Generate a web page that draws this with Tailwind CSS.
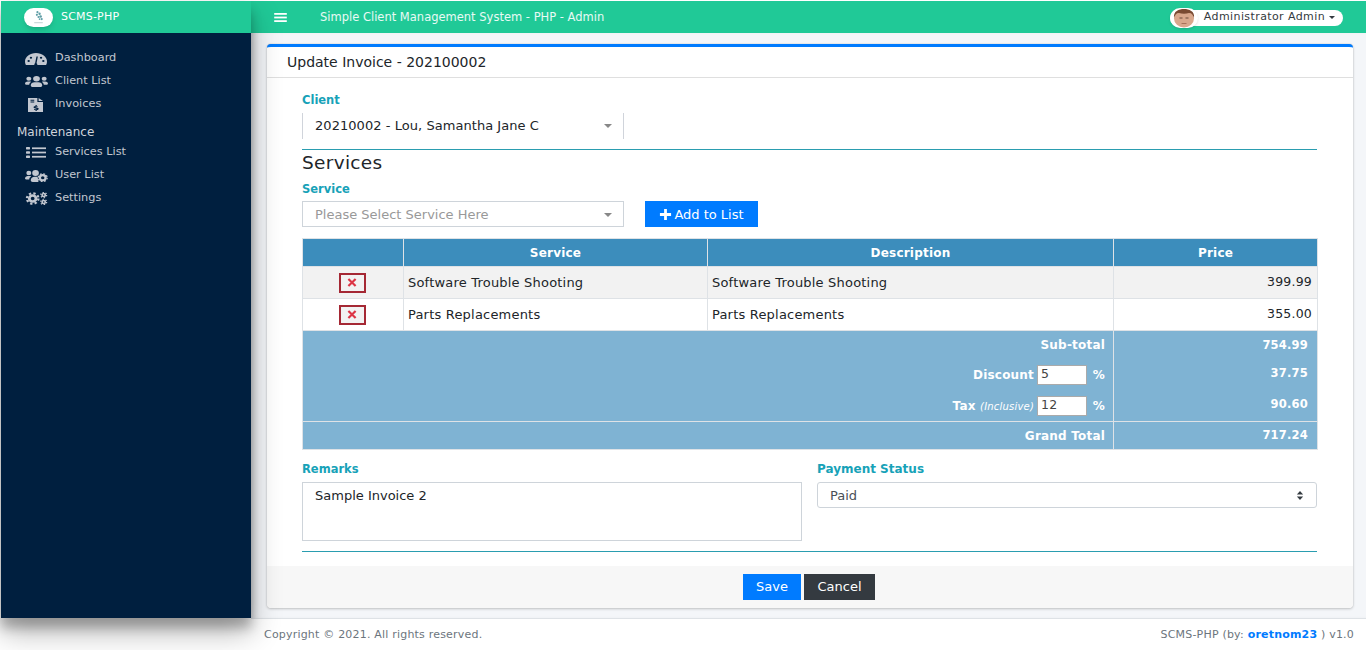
<!DOCTYPE html>
<html lang="en">
<head>
  <meta charset="UTF-8" />
  <title>Update Invoice</title>
  <script src="https://cdn.jsdelivr.net/npm/@tailwindcss/browser@4"></script>
</head>
<body class="h-[650px] overflow-hidden bg-white pt-px pl-px font-['DejaVu_Sans',sans-serif] text-[13px] text-[#212529]">
<div class="flex h-[649px]">

  <!-- Sidebar -->
  <aside class="relative z-10 h-[617px] w-[250px] shrink-0 bg-[#001f3f] shadow-[0_14px_28px_rgba(0,0,0,0.3),0_10px_10px_rgba(0,0,0,0.22)]">
    <div class="flex h-8 items-center bg-[#20c997] pl-[23px] text-white">
      <div class="flex h-[19px] w-[29px] items-center justify-center rounded-full bg-white shadow-md">
        <svg viewBox="0 0 14 14" class="h-[15px] w-[15px]" fill="#5f9ea6"><circle cx="6" cy="2" r="1"/><circle cx="8" cy="3.500" r="1.100"/><circle cx="5.500" cy="4.500" r="1"/><circle cx="9" cy="6" r="1.200"/><circle cx="7" cy="6.500" r="1"/><circle cx="10" cy="8.500" r="1"/><circle cx="8" cy="8.500" r=".8"/><rect x="3" y="11.500" width="8" height=".8" fill="#b9c9cc"/></svg>
      </div>
      <span class="ml-2 text-[11px] tracking-[0.2px]">SCMS-PHP</span>
    </div>
    <nav class="pt-[14px] text-[11.300px] text-[#c2c7d0]">
      <a class="flex h-[23px] items-center pl-6"><span class="flex w-[30px]">
        <svg viewBox="0 0 24 16" preserveAspectRatio="none" class="h-[12px] w-[22px]" fill="#c2c7d0"><path d="M12 0C5.400 0 0 5 0 11.500c0 1.700.4 3.100 1 4.500h22c.6-1.400 1-2.800 1-4.500C24 5 18.600 0 12 0zm-1 13.500l1.500-9 1.500.3-1.400 8.700c1 .6 1 1.500.7 2.500h-3c-.3-1 0-2 .7-2.500zM4 12a1.300 1.300 0 110-2.600 1.300 1.300 0 010 2.600zm2.500-4.500a1.300 1.300 0 110-2.600 1.300 1.300 0 010 2.600zM20 12a1.300 1.300 0 110-2.600 1.300 1.300 0 010 2.600zm-2.500-4.500a1.300 1.300 0 110-2.600 1.300 1.300 0 010 2.600z"/></svg></span><span>Dashboard</span></a>
      <a class="flex h-[23px] items-center pl-6"><span class="flex w-[30px]">
        <svg viewBox="0 0 24 14" preserveAspectRatio="none" class="h-[11px] w-[23px]" fill="#c2c7d0"><circle cx="4" cy="3.500" r="2.600"/><circle cx="20" cy="3.500" r="2.600"/><circle cx="12" cy="3.600" r="3.500"/><path d="M0 10c0-2 1.500-3 3-3h2c.6 0 1 .2 1.400.5C5 8.500 4.500 9.500 4.400 11H1c-.6 0-1-.4-1-1zM24 10c0-2-1.500-3-3-3h-2c-.6 0-1 .2-1.400.5 1.400 1 1.900 2 2 3.500H23c.6 0 1-.4 1-1zM6 12c0-2.400 1.800-4 4-4h4c2.200 0 4 1.600 4 4 0 1.100-.9 2-2 2H8c-1.100 0-2-.9-2-2z"/></svg></span><span>Client List</span></a>
      <a class="flex h-[23px] items-center pl-6"><span class="flex w-[30px] pl-[3px]">
        <svg viewBox="0 0 12 16" preserveAspectRatio="none" class="h-[14px] w-[15px]" fill="#c2c7d0"><path fill-rule="evenodd" d="M0 0h7.500v4.500H12V16H0zM8.500 0L12 3.500H8.500zM2 2v1h3V2zm0 2v1h3V4zm4 4v1c-1.200.2-1.700 1-1.500 1.800.2.900 1.200 1.100 2.200 1.400.6.200.3.800-.3.700-.5 0-.9-.1-1.300-.3l-.4.800c.5.200.9.300 1.300.4v1h1v-1c1.200-.2 1.700-1 1.500-1.900-.2-.9-1.200-1.100-2.200-1.400-.6-.2-.3-.7.300-.6.400 0 .8.100 1.100.2l.3-.8c-.4-.1-.7-.2-1-.3V8z"/></svg></span><span>Invoices</span></a>
      <div class="mt-[6px] flex h-[19px] items-center pl-4 text-[12px] text-[#d0d4db]">Maintenance</div>
      <a class="flex h-[23px] items-center pl-6"><span class="flex w-[30px] pl-[1px]">
        <svg viewBox="0 0 20 14" preserveAspectRatio="none" class="h-[11px] w-[20px]" fill="#c2c7d0"><rect x="0" y="0" width="4" height="3.200" rx=".6"/><rect x="0" y="5.400" width="4" height="3.200" rx=".6"/><rect x="0" y="10.800" width="4" height="3.200" rx=".6"/><rect x="6" y=".5" width="14" height="2.200"/><rect x="6" y="5.900" width="14" height="2.200"/><rect x="6" y="11.300" width="14" height="2.200"/></svg></span><span>Services List</span></a>
      <a class="flex h-[23px] items-center pl-6"><span class="flex w-[30px]">
        <svg viewBox="0 0 24 14" preserveAspectRatio="none" class="h-[12px] w-[23px]" fill="#c2c7d0"><circle cx="4" cy="3.500" r="2.600"/><circle cx="11" cy="3.600" r="3.500"/><path d="M0 10c0-2 1.500-3 3-3h2c.6 0 1 .2 1.400.5C5 8.500 4.500 9.500 4.400 11H1c-.6 0-1-.4-1-1zM6 12c0-2.400 1.800-4 4-4h3c.5 2 1 3.500 1 6H8c-1.100 0-2-.9-2-2z"/><circle cx="18.500" cy="9" r="3" fill="none" stroke="#c2c7d0" stroke-width="2.400"/><circle cx="18.500" cy="9" r="4.600" fill="none" stroke="#c2c7d0" stroke-width="1.400" stroke-dasharray="1.900 1.710"/></svg></span><span>User List</span></a>
      <a class="flex h-[23px] items-center pl-6"><span class="flex w-[30px]">
        <svg viewBox="0 0 24 15" preserveAspectRatio="none" class="h-[13px] w-[23px]" fill="none" stroke="#c2c7d0"><circle cx="8" cy="7.500" r="3.500" stroke-width="3"/><circle cx="8" cy="7.500" r="6" stroke-width="2.400" stroke-dasharray="2.400 2.312"/><circle cx="19.500" cy="3.500" r="1.700" stroke-width="1.800"/><circle cx="19.500" cy="3.500" r="3.100" stroke-width="1.300" stroke-dasharray="1.500 1.746"/><circle cx="19.500" cy="11.500" r="1.700" stroke-width="1.800"/><circle cx="19.500" cy="11.500" r="3.100" stroke-width="1.300" stroke-dasharray="1.500 1.746"/></svg></span><span>Settings</span></a>
    </nav>
  </aside>

  <!-- Right column -->
  <div class="flex min-w-0 flex-1 flex-col">
    <header class="flex h-8 shrink-0 items-center bg-[#20c997] pr-[23px] pl-[23px] text-white">
      <svg viewBox="0 0 14 10" class="h-[9px] w-[13px]" fill="#fff"><rect width="14" height="2"/><rect y="4" width="14" height="2"/><rect y="8" width="14" height="2"/></svg>
      <span class="ml-[33px] pt-px text-[11.500px] text-white/90">Simple Client Management System - PHP - Admin</span>
      <div class="mt-px ml-auto flex h-[16px] items-center rounded-full bg-white pr-2 text-[11px] tracking-[0.4px] text-[#343a40]">
        <svg viewBox="0 0 28 20" class="relative -my-1 h-[20px] w-[28px] rounded-full bg-white shadow">
          <ellipse cx="14" cy="10.500" rx="10" ry="9" fill="#d9a78c"/>
          <path d="M4 10C3 3 9 1 14 1s11 2 10 9c-1-3-2-5-5-5-3 1-7 1-10 0-3 0-4 2-5 5z" fill="#7a4a32"/>
          <path d="M9.500 10h3M15.500 10h3" stroke="#6b4a3a" stroke-width="1"/>
          <path d="M11.500 15.500h5" stroke="#a8705a" stroke-width="1"/>
        </svg>
        <span class="ml-[6px]">Administrator Admin</span>
        <span class="ml-1 h-0 w-0 border-x-[3.500px] border-t-[3.500px] border-x-transparent border-t-[#343a40]"></span>
      </div>
    </header>

    <main class="flex h-[585px] shrink-0 flex-col bg-[#f4f6f9] pt-[11px] pr-[13px] pb-[10px] pl-[16px] shadow-[inset_6px_0_8px_-6px_rgba(0,0,0,0.2)]">
      <section class="flex flex-1 flex-col rounded-[4px] border-t-[3px] border-[#007bff] bg-white shadow-[0_0_1px_rgba(0,0,0,0.3),0_1px_3px_rgba(0,0,0,0.2)]">
        <div class="flex h-[31px] items-center border-b border-[#dfdfdf] px-5 text-[14px]">Update Invoice - 202100002</div>

        <div class="flex-1 pt-[13px] pr-[36px] pl-[35px]">
          <label class="block h-[17px] text-[11.500px] leading-[19px] font-bold text-[#17a2b8]">Client</label>
          <div class="mt-[5px] flex h-[26px] w-[322px] items-center justify-between border-x border-[#d0d4db] pr-[11px] pl-3 tracking-[0.05px]">
            <span>20210002 - Lou, Samantha Jane C</span>
            <span class="h-0 w-0 border-x-4 border-t-4 border-x-transparent border-t-[#888]"></span>
          </div>
          <hr class="mt-[10px] border-[#2a9db0]" />
          <h3 class="mt-px h-[23px] text-[18.500px] leading-[23px] tracking-[0.3px] text-[#212529]">Services</h3>
          <label class="mt-[6px] block h-[17px] text-[11.500px] leading-[19px] font-bold text-[#17a2b8]">Service</label>
          <div class="mt-[4px] flex items-center">
            <div class="flex h-[26px] w-[322px] items-center justify-between border border-[#ced4da] pt-px pr-[11px] pl-3 text-[#999]">
              <span>Please Select Service Here</span>
              <span class="h-0 w-0 border-x-4 border-t-4 border-x-transparent border-t-[#888]"></span>
            </div>
            <button class="ml-[21px] flex h-[26px] w-[113px] items-center justify-center gap-[2px] bg-[#007bff] pt-px text-white">
              <svg viewBox="0 0 14 14" class="h-[13px] w-[13px]" fill="#fff"><path d="M5.500 1h3v4.500H13v3H8.500V13h-3V8.500H1v-3h4.500z"/></svg>Add to List
            </button>
          </div>

          <table class="mt-[11px] w-[1015px] table-fixed border-collapse tracking-[0.2px]">
            <colgroup><col class="w-[101px]" /><col class="w-[304px]" /><col class="w-[406px]" /><col class="w-[204px]" /></colgroup>
            <thead>
              <tr class="h-[28px] bg-[#3c8dbc] text-[12px] text-white">
                <th class="border border-[#dee2e6] font-bold"></th>
                <th class="border border-[#dee2e6] font-bold">Service</th>
                <th class="border border-[#dee2e6] font-bold">Description</th>
                <th class="border border-[#dee2e6] font-bold">Price</th>
              </tr>
            </thead>
            <tbody>
              <tr class="h-[32px] bg-[#f2f2f2]">
                <td class="border border-[#dee2e6] pr-[2px] text-center"><button class="inline-flex h-[20px] w-[27px] items-center justify-center border-2 border-[#a52834] bg-[#f2f2f2] align-middle"><svg viewBox="0 0 10 10" class="h-[9px] w-[10px]" stroke="#dc3545" stroke-width="2.400"><path d="M1 1l8 8M9 1l-8 8"/></svg></button></td>
                <td class="border border-[#dee2e6] px-1">Software Trouble Shooting</td>
                <td class="border border-[#dee2e6] px-1">Software Trouble Shooting</td>
                <td class="border border-[#dee2e6] px-[5px] text-right text-[12.500px]">399.99</td>
              </tr>
              <tr class="h-[32px] bg-white">
                <td class="border border-[#dee2e6] pr-[2px] text-center"><button class="inline-flex h-[20px] w-[27px] items-center justify-center border-2 border-[#a52834] bg-[#f2f2f2] align-middle"><svg viewBox="0 0 10 10" class="h-[9px] w-[10px]" stroke="#dc3545" stroke-width="2.400"><path d="M1 1l8 8M9 1l-8 8"/></svg></button></td>
                <td class="border border-[#dee2e6] px-1">Parts Replacements</td>
                <td class="border border-[#dee2e6] px-1">Parts Replacements</td>
                <td class="border border-[#dee2e6] px-[5px] text-right text-[12.500px]">355.00</td>
              </tr>
            </tbody>
            <tfoot class="bg-[#7fb3d3] text-[12px] font-bold text-white">
              <tr class="h-[28px]">
                <td colspan="3" class="border-x border-t border-[#dee2e6] pt-px pr-2 text-right">Sub-total</td>
                <td class="border-x border-t border-[#dee2e6] px-[9px] pt-px text-right text-[11.500px]">754.99</td>
              </tr>
              <tr class="h-[32px]">
                <td colspan="3" class="border-x border-[#dee2e6] pr-2 text-right">
                  <div class="flex items-center justify-end gap-[3px]"><span class="pt-px">Discount</span> <span class="flex h-5 w-[50px] items-center border border-[#aaa] bg-white pl-[3px] text-[12.500px] font-normal text-[#444]">5</span><span class="w-[15px] text-right">%</span></div>
                </td>
                <td class="border-x border-[#dee2e6] px-[9px] pb-[2px] text-right text-[11.500px]">37.75</td>
              </tr>
              <tr class="h-[31px]">
                <td colspan="3" class="border-x border-[#dee2e6] pr-2 text-right">
                  <div class="flex items-center justify-end gap-[3px]"><span>Tax <em class="text-[10px] font-normal">(Inclusive)</em></span><span class="flex h-5 w-[50px] items-center border border-[#aaa] bg-white pl-[3px] text-[12.500px] font-normal text-[#444]">12</span><span class="w-[15px] text-right">%</span></div>
                </td>
                <td class="border-x border-[#dee2e6] px-[9px] pb-[3px] text-right text-[11.500px]">90.60</td>
              </tr>
              <tr class="h-[28px]">
                <td colspan="3" class="border border-[#dee2e6] pt-px pr-2 text-right">Grand Total</td>
                <td class="border border-[#dee2e6] px-[9px] pt-px text-right text-[11.500px]">717.24</td>
              </tr>
            </tfoot>
          </table>

          <div class="mt-[10px] grid grid-cols-[500px_500px] gap-x-[15px]">
            <div>
              <label class="block h-[17px] text-[11.500px] leading-[19px] font-bold text-[#17a2b8]">Remarks</label>
              <div class="mt-[5px] h-[59px] border border-[#ced4da] px-3 py-[3px]">Sample Invoice 2</div>
            </div>
            <div>
              <label class="block h-[17px] text-[12px] leading-[19px] font-bold text-[#17a2b8]">Payment Status</label>
              <div class="mt-[5px] flex h-[26px] items-center justify-between rounded-[3px] border border-[#ced4da] pt-px pr-3 pl-3 text-[#495057]">
                <span>Paid</span>
                <svg viewBox="0 0 8 10" class="h-[9px] w-[8px]" fill="#343a40"><path d="M4 0l3.500 4h-7zM4 10L.5 6h7z"/></svg>
              </div>
            </div>
          </div>
          <hr class="mt-[10px] border-[#2a9db0]" />
        </div>

        <div class="flex h-[42px] items-center justify-center gap-[3px] rounded-b-[4px] bg-[#f7f7f7] pr-[2px]">
          <button class="h-[26px] w-[58px] bg-[#007bff] text-white">Save</button>
          <button class="h-[26px] w-[71px] bg-[#343a40] text-white">Cancel</button>
        </div>
      </section>
    </main>

    <footer class="flex h-[32px] shrink-0 items-center justify-between border-t border-[#dee2e6] pt-px pr-3 pl-[13px] text-[11px] tracking-[0.2px] text-[#6c757d]">
      <span>Copyright © 2021. All rights reserved.</span>
      <span>SCMS-PHP (by: <a class="font-bold text-[#007bff]">oretnom23</a> ) v1.0</span>
    </footer>
  </div>
</div>
</body>
</html>
